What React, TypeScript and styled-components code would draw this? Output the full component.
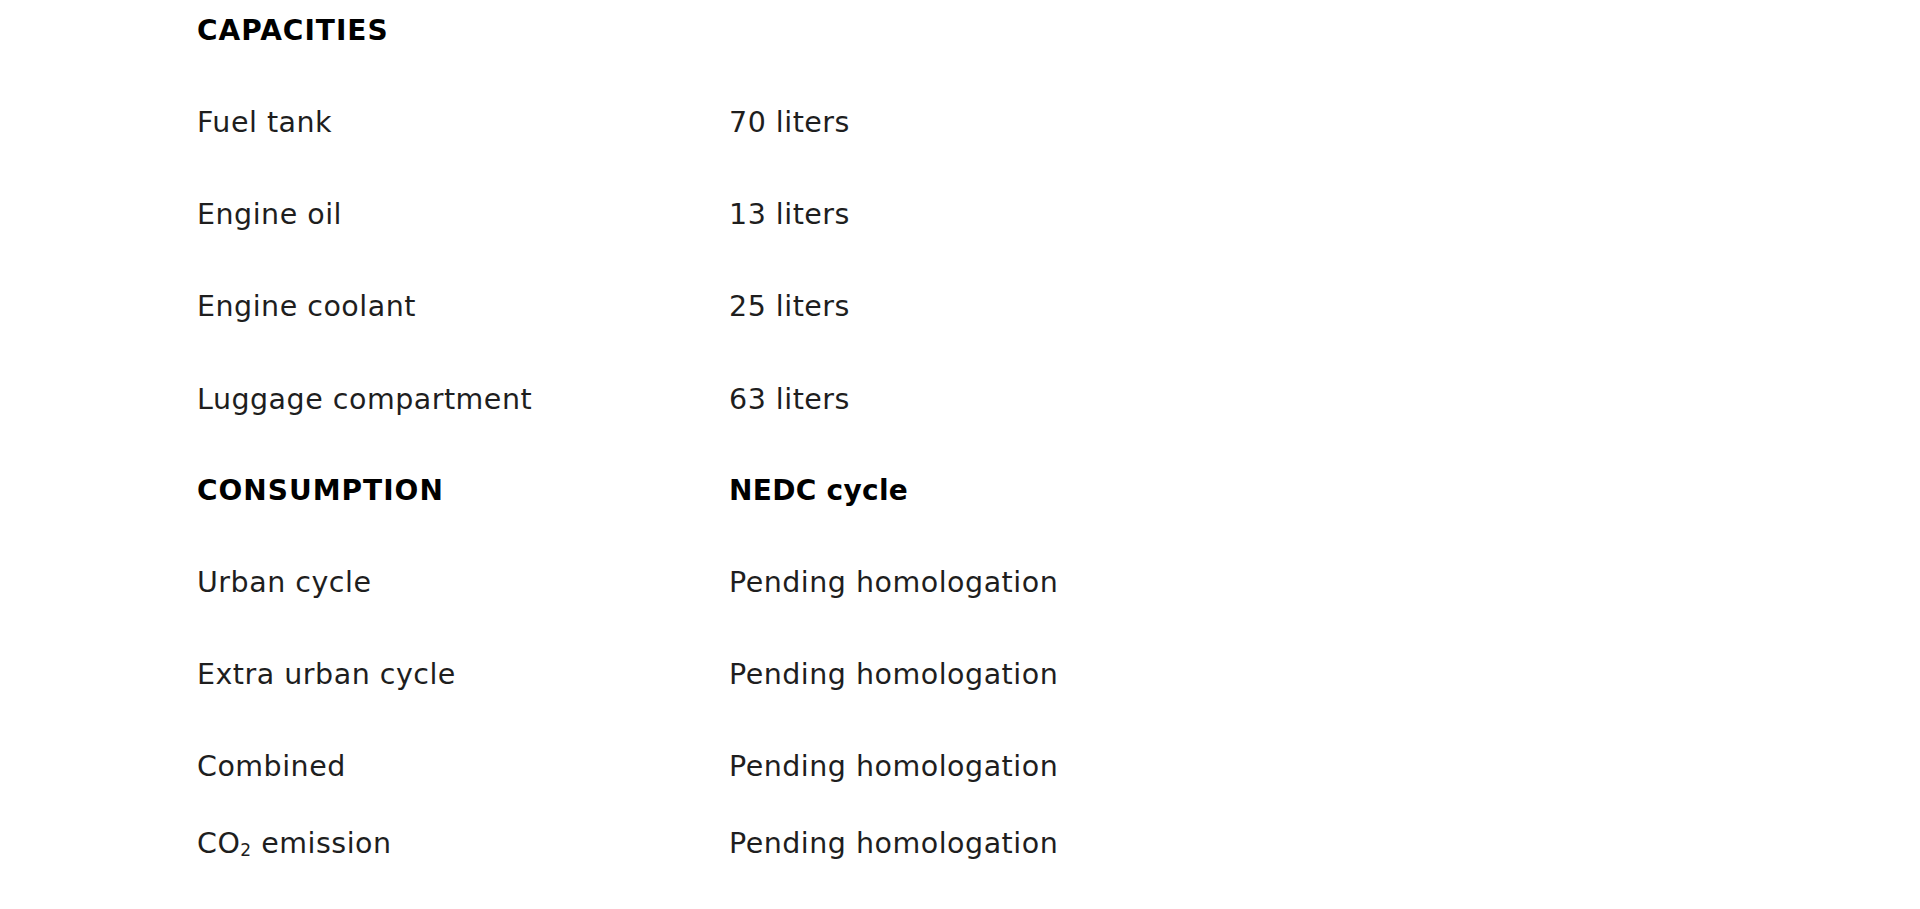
import * as React from "react";
import styled, { createGlobalStyle } from "styled-components";

const GlobalStyle = createGlobalStyle`
  html, body {
    margin: 0;
    padding: 0;
    background: #ffffff;
  }
  body {
    font-family: "DejaVu Sans", "Open Sans", sans-serif;
    color: #1e1e1e;
  }
`;

const Page = styled.div`
  padding: 15px 0 0 197px;
  min-height: 894px;
  background: #ffffff;
`;

const SpecTable = styled.div`
  display: grid;
  grid-template-columns: 532px auto;
  width: 1100px;
`;

const Cell = styled.div<{ $gap: number }>`
  font-size: 28.5px;
  line-height: 32px;
  letter-spacing: 0.5px;
  padding-bottom: ${(p) => p.$gap}px;
  white-space: nowrap;
`;

const Label = styled(Cell)`
  font-weight: 400;
  color: #1e1e1e;
`;

const Value = styled(Cell)`
  font-weight: 400;
  color: #1e1e1e;
`;

const Heading = styled(Cell)`
  font-size: 28px;
  font-weight: 700;
  letter-spacing: 1px;
  text-transform: uppercase;
  color: #000000;
`;

const HeadValue = styled(Cell)`
  font-size: 28px;
  font-weight: 700;
  letter-spacing: 0.3px;
  color: #000000;
`;

const Sub = styled.sub`
  font-size: 17px;
  vertical-align: -3px;
  line-height: 0;
`;

interface IRow {
  label: React.ReactNode;
  value?: React.ReactNode;
  kind?: "heading" | "plain";
  gap?: number;
}

const rows: IRow[] = [
  { label: "Capacities", kind: "heading" },
  { label: "Fuel tank", value: "70 liters" },
  { label: "Engine oil", value: "13 liters" },
  { label: "Engine coolant", value: "25 liters", gap: 61 },
  { label: "Luggage compartment", value: "63 liters", gap: 59 },
  { label: "Consumption", value: "NEDC cycle", kind: "heading", gap: 60 },
  { label: "Urban cycle", value: "Pending homologation" },
  { label: "Extra urban cycle", value: "Pending homologation", gap: 60 },
  { label: "Combined", value: "Pending homologation", gap: 45 },
  {
    label: (
      <>
        CO<Sub>2</Sub> emission
      </>
    ),
    value: "Pending homologation",
    gap: 0
  }
];

export default class App extends React.Component {
  public render() {
    return (
      <Page>
        <GlobalStyle />
        <SpecTable>
          {rows.map((row, i) => {
            const gap = row.gap !== undefined ? row.gap : 60;
            if (row.kind === "heading") {
              return (
                <React.Fragment key={i}>
                  <Heading $gap={gap}>{row.label}</Heading>
                  <HeadValue $gap={gap}>{row.value || ""}</HeadValue>
                </React.Fragment>
              );
            }
            return (
              <React.Fragment key={i}>
                <Label $gap={gap}>{row.label}</Label>
                <Value $gap={gap}>{row.value}</Value>
              </React.Fragment>
            );
          })}
        </SpecTable>
      </Page>
    );
  }
}
